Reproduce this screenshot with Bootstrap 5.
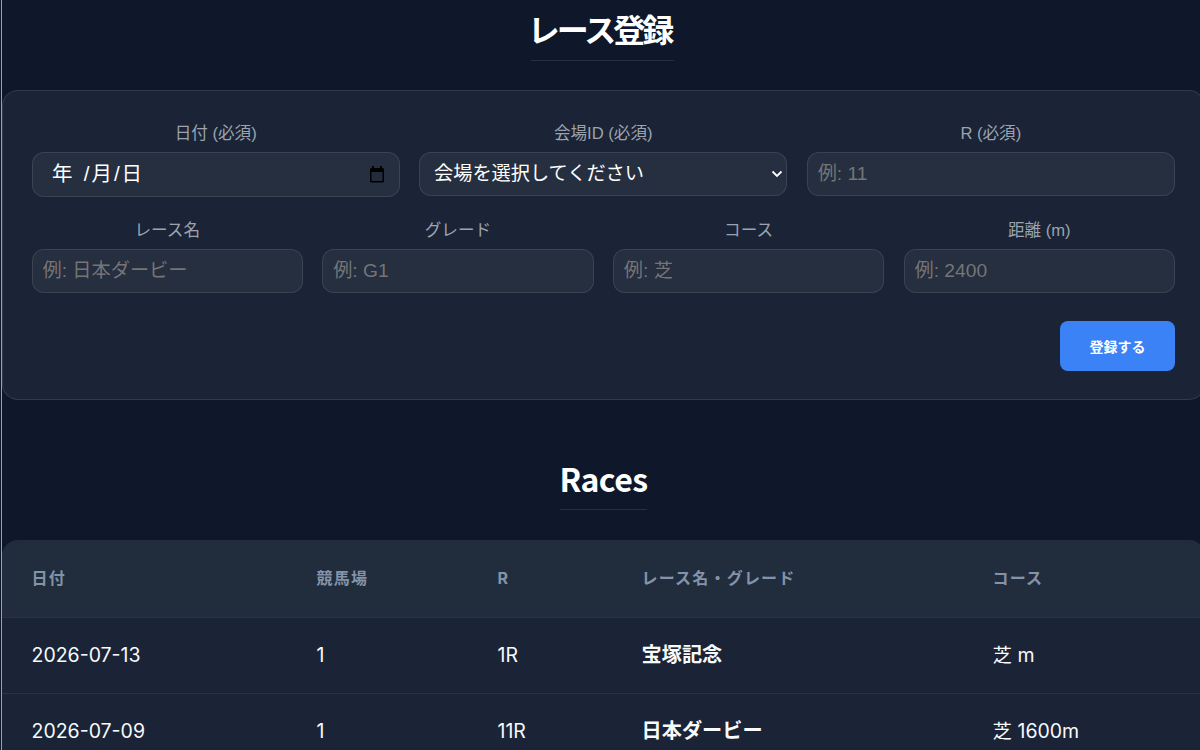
<!DOCTYPE html>
<html lang="ja">
<head>
<meta charset="utf-8">
<title>レース登録</title>
<link href="https://cdn.jsdelivr.net/npm/bootstrap@5.3.0/dist/css/bootstrap.min.css" rel="stylesheet">
<style>
html,body{overflow:hidden;height:750px;background:#0f172a;}
body{font-family:"Inter","Noto Sans CJK JP",sans-serif;color:#f8fafc;}
.pagewrap{width:1204px;margin-left:1px;border-left:1px solid #9aa3ad;height:750px;}
.pagehead{text-align:center;height:90px;}
.pagehead.second{height:140px;padding-top:50px;}
.headtext{display:inline-block;margin:0;font-family:"Noto Sans CJK JP",sans-serif;font-weight:700;font-size:32px;line-height:48px;letter-spacing:-.6px;color:#fff;padding:4px 0 7px;border-bottom:1px solid rgba(255,255,255,.1);}
.headtext.jatitle{letter-spacing:-3px;text-indent:-3px;padding:4px 3px 8px 0;margin-left:-2px;}
.formcard{background:#1a2436;border:1px solid rgba(255,255,255,.1);border-radius:16px;padding:31px 29px 28px 28.5px;height:310px;}
.fieldrow{--bs-gutter-x:19.2px;--bs-gutter-y:0;}
.fieldrow.lower{margin-top:21.5px;}
.fieldlabel{display:block;text-align:center;font-family:"Liberation Sans","Noto Sans CJK JP",sans-serif;font-size:16.6px;line-height:23px;color:#9ca3af;margin-bottom:7px;}
.fieldinput{height:44px;background:rgba(255,255,255,.05);border:1px solid rgba(255,255,255,.1);border-radius:12px;font-family:"Liberation Sans","Noto Sans CJK JP",sans-serif;font-size:19.2px;color:#fff;padding:0 10px;box-shadow:none;}
.fieldinput::placeholder{color:#757575;opacity:1;}
.fieldinput:focus{background:rgba(255,255,255,.05);color:#fff;}
.dateinput{height:45px;padding:0 14px 0 19.5px;display:flex;align-items:center;justify-content:space-between;}
.datetext{font-size:20.5px;letter-spacing:2px;word-spacing:1.5px;}
select.fieldinput{padding-left:14px;background-color:rgba(255,255,255,.05);background-image:url("data:image/svg+xml,%3Csvg xmlns='http://www.w3.org/2000/svg' viewBox='0 0 12 8'%3E%3Cpath d='M1.5 1.5l4.5 4.5 4.5-4.5' fill='none' stroke='%23fff' stroke-width='1.8'/%3E%3C/svg%3E");background-repeat:no-repeat;background-size:12px 8px;background-position:right 3px center;}
select.fieldinput option{color:#000;}
.actionrow{margin-top:28.5px;}
.savebtn{width:115px;height:50px;background:#3b82f6;border:0;border-radius:8px;color:#fff;font-weight:700;font-size:14px;font-family:"Noto Sans CJK JP",sans-serif;}
.savebtn:hover{background:#3b82f6;color:#fff;}
.tablecard{background:#1a2436;border-radius:16px;overflow:hidden;}
.racetable{--bs-table-bg:transparent;--bs-table-color:#f8fafc;margin:0;table-layout:fixed;width:100%;}
.racetable th,.racetable td{padding:0 0 0 29.5px;border-bottom:1px solid rgba(255,255,255,.07);vertical-align:middle;}
.racetable th{height:77px;background:#212d3d;color:#8493a8;font-size:16px;font-weight:700;letter-spacing:1.2px;}
.racetable td{height:76px;font-size:19.5px;color:#f8fafc;padding-top:1px;}
.racetable td.racename{font-weight:700;font-size:20.2px;}
.col1{width:285px}.col2{width:181px}.col3{width:144px}.col4{width:351px}
</style>
</head>
<body>
<div class="pagewrap">
  <div class="pagehead"><h2 class="headtext jatitle">レース登録</h2></div>
  <form class="formcard">
    <div class="row fieldrow">
      <div class="col-4">
        <label class="fieldlabel">日付 (必須)</label>
        <div class="form-control fieldinput dateinput"><span class="datetext">年 /月/日</span>
          <svg width="16" height="17" viewBox="0 0 16 17" aria-hidden="true"><path d="M4 0v3M12 0v3" stroke="#000" stroke-width="2"/><rect x="1" y="2" width="14" height="14.5" rx="1.5" fill="#000"/><rect x="2.5" y="6" width="11" height="9" fill="#232c3d"/></svg>
        </div>
      </div>
      <div class="col-4">
        <label class="fieldlabel">会場ID (必須)</label>
        <select class="form-select fieldinput"><option>会場を選択してください</option></select>
      </div>
      <div class="col-4">
        <label class="fieldlabel">R (必須)</label>
        <input class="form-control fieldinput" placeholder="例: 11">
      </div>
    </div>
    <div class="row fieldrow lower">
      <div class="col-3"><label class="fieldlabel">レース名</label><input class="form-control fieldinput" placeholder="例: 日本ダービー"></div>
      <div class="col-3"><label class="fieldlabel">グレード</label><input class="form-control fieldinput" placeholder="例: G1"></div>
      <div class="col-3"><label class="fieldlabel">コース</label><input class="form-control fieldinput" placeholder="例: 芝"></div>
      <div class="col-3"><label class="fieldlabel">距離 (m)</label><input class="form-control fieldinput" placeholder="例: 2400"></div>
    </div>
    <div class="d-flex justify-content-end actionrow"><button type="button" class="btn savebtn">登録する</button></div>
  </form>
  <div class="pagehead second"><h2 class="headtext">Races</h2></div>
  <div class="tablecard">
    <table class="table racetable">
      <colgroup><col class="col1"><col class="col2"><col class="col3"><col class="col4"><col></colgroup>
      <thead><tr><th>日付</th><th>競馬場</th><th>R</th><th>レース名・グレード</th><th>コース</th></tr></thead>
      <tbody>
        <tr><td>2026-07-13</td><td>1</td><td>1R</td><td class="racename">宝塚記念</td><td>芝 m</td></tr>
        <tr><td>2026-07-09</td><td>1</td><td>11R</td><td class="racename">日本ダービー</td><td>芝 1600m</td></tr>
      </tbody>
    </table>
  </div>
</div>
<script src="https://cdn.jsdelivr.net/npm/bootstrap@5.3.0/dist/js/bootstrap.bundle.min.js"></script>
</body>
</html>
